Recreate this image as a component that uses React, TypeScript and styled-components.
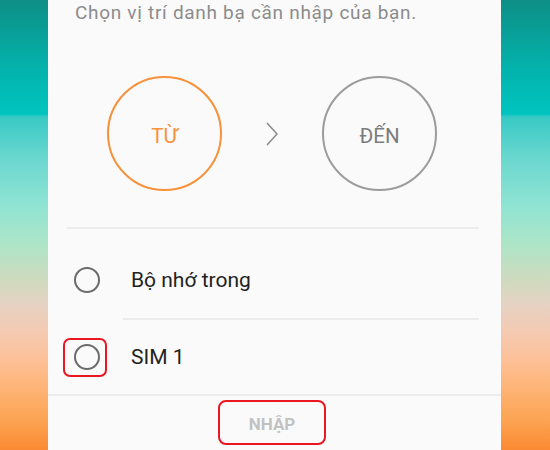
import styled, { createGlobalStyle } from "styled-components";

const GlobalStyle = createGlobalStyle`
  html, body {
    margin: 0;
    padding: 0;
    background: #fafafa;
  }
  body {
    font-family: Roboto, "Noto Sans", "Liberation Sans", sans-serif;
  }
`;

const Screen = styled.div`
  display: flex;
  width: 550px;
  height: 450px;
  overflow: hidden;
`;

const Wallpaper = styled.div<{ $width: number }>`
  flex: 0 0 ${(p) => p.$width}px;
  background: linear-gradient(
    to bottom,
    #0d8f86 0px,
    #03b3ad 70px,
    #00c4bf 114px,
    #38c9c5 117px,
    #6cd8cf 160px,
    #8fe4d3 205px,
    #aee5c7 245px,
    #cfdabf 280px,
    #e6d2c2 305px,
    #f6c9b0 335px,
    #fdc097 360px,
    #fdb374 390px,
    #fca452 420px,
    #fb8a33 450px
  );
`;

const Dialog = styled.div`
  flex: 1;
  display: flex;
  flex-direction: column;
  background: #fafafa;
`;

const Title = styled.div`
  padding: 1px 0 0 27px;
  font-size: 19px;
  line-height: 23px;
  letter-spacing: 0.7px;
  color: #8c8c8c;
`;

const Direction = styled.div`
  display: flex;
  align-items: center;
  gap: 44px;
  margin-top: 52px;
  padding-left: 59px;
`;

const Target = styled.div<{ $color: string; $text: string }>`
  width: 115px;
  height: 115px;
  box-sizing: border-box;
  border: 2px solid ${(p) => p.$color};
  border-radius: 50%;
  display: flex;
  align-items: center;
  justify-content: center;
  font-size: 20.5px;
  padding-top: 4px;
  color: ${(p) => p.$text};
`;

const Chevron = styled.svg`
  width: 12px;
  height: 24px;
  display: block;
`;

const Spacer = styled.div`
  height: 36px;
`;

const Divider = styled.div<{ $left: number; $right: number }>`
  height: 2px;
  background: #ececec;
  margin: 0 ${(p) => p.$right}px 0 ${(p) => p.$left}px;
`;

const Option = styled.div<{ $top: number; $height: number }>`
  display: flex;
  align-items: center;
  gap: 31px;
  height: ${(p) => p.$height}px;
  padding: ${(p) => p.$top}px 0 0 26px;
  box-sizing: border-box;
`;

const Radio = styled.span`
  position: relative;
  width: 26px;
  height: 26px;
  box-sizing: border-box;
  border: 2px solid #6b6b6b;
  border-radius: 50%;
  flex: none;
`;

// red highlight drawn round the selected radio
const Marker = styled.span`
  position: absolute;
  left: -13px;
  top: -8px;
  width: 44px;
  height: 39px;
  box-sizing: border-box;
  border: 2px solid #ea1620;
  border-radius: 7px;
`;

const Label = styled.span`
  font-size: 21px;
  color: #222;
  line-height: 26px;
`;

const Footer = styled.div`
  display: flex;
  justify-content: center;
  padding-top: 4px;
  margin-left: -5px;
`;

const ImportButton = styled.button`
  width: 108px;
  height: 45px;
  box-sizing: border-box;
  border: 2px solid #ea1620;
  border-radius: 8px;
  background: transparent;
  font-family: Roboto, "Noto Sans", sans-serif;
  font-weight: 700;
  font-size: 17px;
  color: #c2c2c2;
  padding-top: 4px;
`;

export default function App() {
  return (
    <Screen>
      <GlobalStyle />
      <Wallpaper $width={48} />
      <Dialog>
        <Title>Chọn vị trí danh bạ cần nhập của bạn.</Title>
        <Direction>
          <Target $color="#f7913a" $text="#f7913a">
            TỪ
          </Target>
          <Chevron viewBox="0 0 12 24">
            <path d="M1 1 L11 12 L1 23" fill="none" stroke="#8a8a8a" strokeWidth="1.5" />
          </Chevron>
          <Target $color="#9c9c9c" $text="#7c7c7c">
            ĐẾN
          </Target>
        </Direction>
        <Spacer />
        <Divider $left={19} $right={22} />
        <Option $top={12} $height={89}>
          <Radio />
          <Label>Bộ nhớ trong</Label>
        </Option>
        <Divider $left={75} $right={22} />
        <Option $top={0} $height={74}>
          <Radio>
            <Marker />
          </Radio>
          <Label>SIM 1</Label>
        </Option>
        <Divider $left={0} $right={0} />
        <Footer>
          <ImportButton>NHẬP</ImportButton>
        </Footer>
      </Dialog>
      <Wallpaper $width={49} />
    </Screen>
  );
}
